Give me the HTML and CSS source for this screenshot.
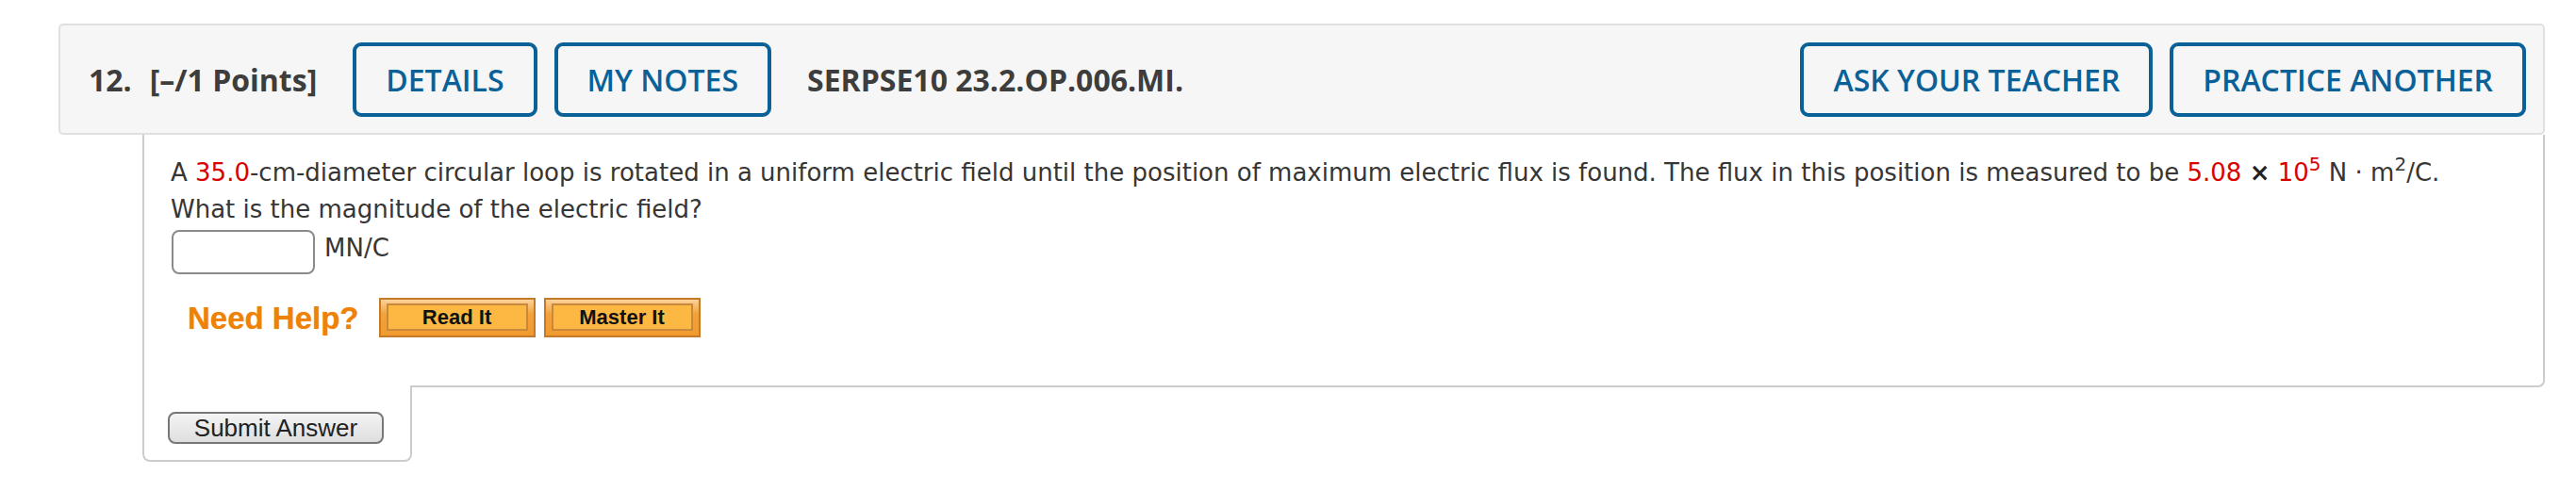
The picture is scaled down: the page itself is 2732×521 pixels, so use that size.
FILE: index.html
```html
<!DOCTYPE html>
<html>
<head>
<meta charset="utf-8">
<link rel="stylesheet" href="styles.css">
</head>
<body>
<div class="question">
  <div class="qhead">
    <span class="qnum">12.</span>
    <span class="qpts">[–/1 Points]</span>
    <a class="qbtn first">DETAILS</a>
    <a class="qbtn">MY NOTES</a>
    <span class="qid">SERPSE10 23.2.OP.006.MI.</span>
    <a class="qbtn push">ASK YOUR TEACHER</a>
    <a class="qbtn">PRACTICE ANOTHER</a>
  </div>
  <div class="qbody">
    <p class="qtext">A <span class="red">35.0</span>-cm-diameter circular loop is rotated in a uniform electric field until the position of maximum electric flux is found. The flux in this position is measured to be <span class="red">5.08</span> <b class="times">×</b> <span class="red">10<sup>5</sup></span> N · m<sup>2</sup>/C.<br>What is the magnitude of the electric field?</p>
    <div class="answer">
      <span class="ansbox"></span>
      <span class="unit">MN/C</span>
    </div>
    <div class="help">
      <span class="needhelp">Need Help?</span>
      <span class="hbtn"><span class="hbtn-in">Read It</span></span>
      <span class="hbtn"><span class="hbtn-in">Master It</span></span>
    </div>
  </div>
  <div class="submit">
    <button class="submit-btn">Submit Answer</button>
  </div>
</div>
</body>
</html>
```

FILE: styles.css
```css
body {
  margin: 0;
  background: #ffffff;
}

.question {
  margin: 25px 0 0 62px;
  width: 2637px;
}

.qhead {
  display: flex;
  align-items: center;
  box-sizing: border-box;
  height: 118px;
  padding: 0 18px 0 30px;
  background: #f6f6f6;
  border: 2px solid #e0e0e0;
  border-radius: 5px;
  font-family: "Open Sans", "Liberation Sans", sans-serif;
  font-size: 32px;
  color: #3d3d3d;
}

.qnum {
  font-weight: 700;
}

.qpts {
  font-weight: 700;
  margin-left: 19px;
}

.qid {
  font-weight: 700;
  margin-left: 38px;
}

.qbtn {
  display: flex;
  align-items: center;
  box-sizing: border-box;
  height: 79px;
  padding: 0 31px;
  border: 4px solid #0a6197;
  border-radius: 9px;
  color: #0a6197;
  font-weight: 600;
  margin-left: 18px;
  white-space: nowrap;
}

.qbtn.first {
  margin-left: 38px;
}

.qbtn.push {
  margin-left: auto;
}

.qbody {
  margin-left: 89px;
  border: 2px solid #cccccc;
  border-top: none;
  border-bottom-right-radius: 7px;
  padding: 21px 28px 51px 28px;
  font-family: "DejaVu Sans", Verdana, sans-serif;
  font-size: 26px;
  line-height: 39px;
  color: #363636;
}

.qtext {
  margin: 0;
}

.red {
  color: #d90000;
}

.times {
  color: #222222;
}

sup {
  font-size: 20px;
  line-height: 0;
  vertical-align: 11px;
}

.answer {
  display: flex;
  align-items: flex-start;
  margin-top: 2px;
}

.ansbox {
  display: block;
  box-sizing: border-box;
  width: 152px;
  height: 47px;
  margin-left: 1px;
  border: 2px solid #8a8a8a;
  border-radius: 8px;
  background: #ffffff;
}

.unit {
  margin-left: 10px;
}

.help {
  display: flex;
  align-items: center;
  margin-top: 25px;
  padding-left: 18px;
}

.needhelp {
  font-family: "Liberation Sans", Arial, sans-serif;
  font-weight: 700;
  font-size: 33px;
  color: #ee8208;
  margin-right: 21px;
  text-shadow: 0 0 1px rgba(238, 130, 8, 0.6);
}

.hbtn {
  display: block;
  box-sizing: border-box;
  width: 166px;
  height: 42px;
  padding: 4px 6px 5px 6px;
  border: 2px solid #c47a26;
  background: linear-gradient(#fcd29a, #f3a23a 40%, #f19a2e);
  margin-right: 9px;
}

.hbtn-in {
  display: flex;
  align-items: center;
  justify-content: center;
  box-sizing: border-box;
  height: 100%;
  border: 2px solid #c8893c;
  background: #fdb843;
  font-family: "Liberation Sans", Arial, sans-serif;
  font-weight: 700;
  font-size: 22px;
  color: #111111;
}

.submit {
  position: relative;
  margin: -2px 0 0 89px;
  width: 286px;
  box-sizing: border-box;
  background: #ffffff;
  border: 2px solid #cccccc;
  border-top: none;
  border-radius: 0 0 8px 8px;
  padding: 28px 0 17px 25px;
}

.submit-btn {
  display: block;
  box-sizing: border-box;
  width: 229px;
  height: 34px;
  padding: 0;
  border: 2px solid #777777;
  border-radius: 8px;
  background: linear-gradient(#f4f4f4, #dedede);
  font-family: "Liberation Sans", Arial, sans-serif;
  font-size: 26px;
  line-height: 30px;
  color: #222222;
}
```
